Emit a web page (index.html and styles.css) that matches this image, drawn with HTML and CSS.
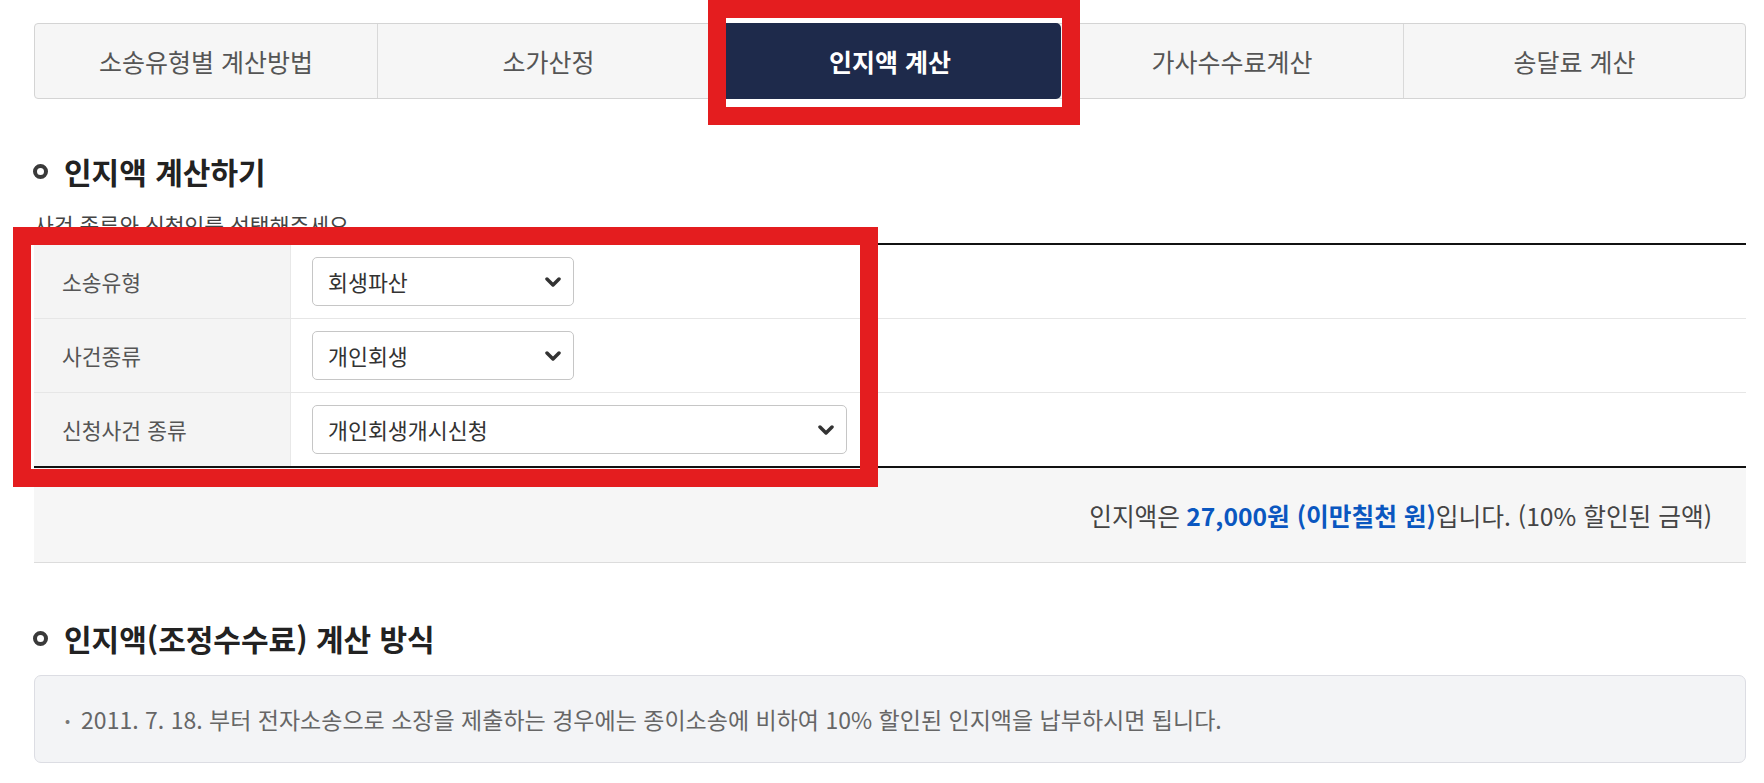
FILE: index.html
```html
<!DOCTYPE html>
<html lang="ko">
<head>
<meta charset="utf-8">
<title>인지액 계산</title>
<link rel="stylesheet" href="styles.css">
</head>
<body>
<div class="page">
  <nav class="tabs">
    <div class="tab">소송유형별 계산방법</div>
    <div class="tab">소가산정</div>
    <div class="tab active">인지액 계산</div>
    <div class="tab">가사수수료계산</div>
    <div class="tab">송달료 계산</div>
  </nav>

  <h2 class="section-title"><span class="ring"></span>인지액 계산하기</h2>
  <p class="subtitle">사건 종류와 신청인를 선택해주세요.</p>

  <div class="form-table">
    <div class="row">
      <div class="label">소송유형</div>
      <div class="field">
        <div class="select short"><span>회생파산</span>
          <svg class="chev" viewBox="0 0 16 10" width="16" height="10"><polyline points="2,2 8,8 14,2" fill="none" stroke="#333" stroke-width="3.5" stroke-linecap="round" stroke-linejoin="round"/></svg>
        </div>
      </div>
    </div>
    <div class="row">
      <div class="label">사건종류</div>
      <div class="field">
        <div class="select short"><span>개인회생</span>
          <svg class="chev" viewBox="0 0 16 10" width="16" height="10"><polyline points="2,2 8,8 14,2" fill="none" stroke="#333" stroke-width="3.5" stroke-linecap="round" stroke-linejoin="round"/></svg>
        </div>
      </div>
    </div>
    <div class="row">
      <div class="label">신청사건 종류</div>
      <div class="field">
        <div class="select long"><span>개인회생개시신청</span>
          <svg class="chev" viewBox="0 0 16 10" width="16" height="10"><polyline points="2,2 8,8 14,2" fill="none" stroke="#333" stroke-width="3.5" stroke-linecap="round" stroke-linejoin="round"/></svg>
        </div>
      </div>
    </div>
  </div>

  <div class="result">인지액은 <strong>27,000원 (이만칠천 원)</strong>입니다. (10% 할인된 금액)</div>

  <h2 class="section-title second"><span class="ring"></span>인지액(조정수수료) 계산 방식</h2>
  <div class="note"><span class="dot">•</span>2011. 7. 18. 부터 전자소송으로 소장을 제출하는 경우에는 종이소송에 비하여 10% 할인된 인지액을 납부하시면 됩니다.</div>

  <div class="mark mark-tab"></div>
  <div class="mark mark-form"></div>
</div>
</body>
</html>
```

FILE: styles.css
```css
* { box-sizing: border-box; }
html, body { margin: 0; padding: 0; background: #fff; }
body { font-family: "Noto Sans CJK KR", "Noto Sans", sans-serif; color: #333; }
.page { position: relative; padding: 23px 18px 0 34px; min-height: 783px; }

.tabs {
  display: grid;
  grid-template-columns: repeat(5, 1fr);
  height: 76px;
  border: 1px solid #d4d4d4;
  border-radius: 4px;
  background: #f6f6f6;
}
.tab {
  display: flex;
  align-items: center;
  justify-content: center;
  font-size: 25px;
  color: #555;
  border-left: 1px solid #d9d9d9;
}
.tab:first-child { border-left: none; }
.tab.active {
  background: #1e2a4b;
  color: #fff;
  font-weight: 700;
  border-left: none;
  border-radius: 5px;
  margin: -1px 0;
}
.tab.active + .tab { border-left: none; }

.section-title {
  display: flex;
  align-items: center;
  margin: 54px 0 0;
  font-size: 30px;
  line-height: 36px;
  font-weight: 700;
  color: #222;
}
.section-title.second { margin-top: 57px; }
.ring {
  width: 15px;
  height: 15px;
  border: 4px solid #3a3a3a;
  border-radius: 50%;
  margin: 0 16px 0 -1px;
  flex: none;
}
.subtitle {
  margin: 24px 0 0;
  font-size: 21.5px;
  line-height: 24px;
  color: #444;
}

.form-table {
  margin-top: 6px;
  border-top: 2px solid #111;
  border-bottom: 2px solid #111;
}
.row {
  display: flex;
  height: 74px;
  border-bottom: 1px solid #e6e6e6;
}
.row:last-child { border-bottom: none; height: 73px; }
.label {
  width: 257px;
  flex: none;
  display: flex;
  align-items: center;
  padding-left: 28px;
  background: #f4f4f4;
  border-right: 1px solid #e8e8e8;
  font-size: 21.5px;
  color: #555;
}
.field {
  flex: 1;
  display: flex;
  align-items: center;
  padding-left: 21px;
}
.select {
  height: 49px;
  display: flex;
  align-items: center;
  justify-content: space-between;
  padding: 0 12px 0 15px;
  border: 1px solid #c6c6c6;
  border-radius: 5px;
  background: #fff;
  font-size: 21.7px;
  color: #333;
}
.select.short { width: 262px; }
.select.long { width: 535px; }
.chev { display: block; }

.result {
  height: 95px;
  display: flex;
  align-items: center;
  justify-content: flex-end;
  padding-right: 34px;
  background: #f6f6f6;
  border-bottom: 1px solid #dcdcdc;
  font-size: 24.7px;
  color: #444;
}
.result strong { color: #0a57c0; font-weight: 700; margin: 0 0 0 0.25em; }

.note {
  margin-top: 19px;
  height: 88px;
  display: flex;
  align-items: center;
  padding-left: 30px;
  background: #f3f4f6;
  border: 1px solid #dcdde3;
  border-radius: 7px;
  font-size: 23px;
  color: #666;
}
.dot { font-size: 15px; margin-right: 11px; color: #777; }

.mark {
  position: absolute;
  border: 18px solid #e41d1f;
  pointer-events: none;
}
.mark-tab { left: 708px; top: 0; width: 372px; height: 125px; }
.mark-form { left: 13px; top: 227px; width: 865px; height: 260px; }
```
